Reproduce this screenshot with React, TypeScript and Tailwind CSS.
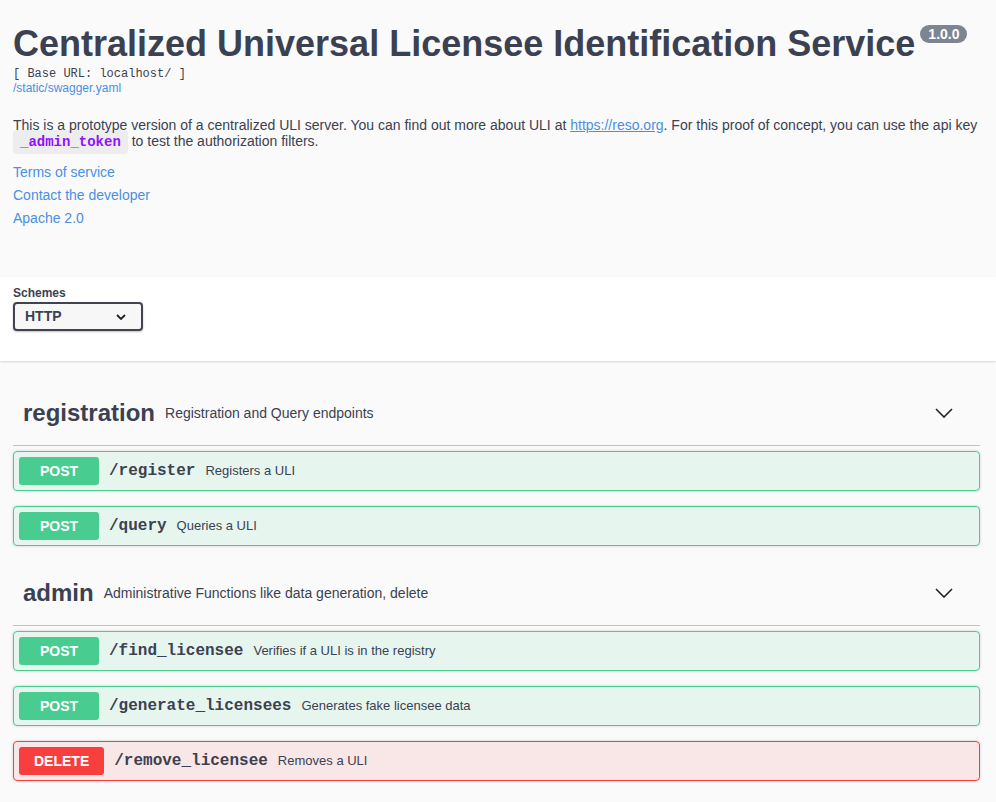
import React from "react";

type Op = { method: "POST" | "DELETE"; path: string; summary: string };

const sections: { name: string; desc: string; ops: Op[] }[] = [
  {
    name: "registration",
    desc: "Registration and Query endpoints",
    ops: [
      { method: "POST", path: "/register", summary: "Registers a ULI" },
      { method: "POST", path: "/query", summary: "Queries a ULI" },
    ],
  },
  {
    name: "admin",
    desc: "Administrative Functions like data generation, delete",
    ops: [
      { method: "POST", path: "/find_licensee", summary: "Verifies if a ULI is in the registry" },
      { method: "POST", path: "/generate_licensees", summary: "Generates fake licensee data" },
      { method: "DELETE", path: "/remove_licensee", summary: "Removes a ULI" },
    ],
  },
];

const Chevron = () => (
  <svg width="18" height="10" viewBox="0 0 18 10" fill="none">
    <path d="M1 1 L9 9 L17 1" stroke="#222" strokeWidth="1.6" />
  </svg>
);

const Operation = ({ op }: { op: Op }) => {
  const isPost = op.method === "POST";
  return (
    <div
      className={`mb-[15px] flex h-[40px] items-center rounded-[4px] border px-[5px] shadow-[0_0_3px_rgba(0,0,0,0.19)] ${
        isPost ? "border-[#49cc90] bg-[#49cc901a]" : "border-[#f93e3e] bg-[#f93e3e1a]"
      }`}
    >
      <div
        className={`flex h-[28px] min-w-[80px] items-center justify-center rounded-[3px] px-[15px] text-[14px] font-bold text-white ${
          isPost ? "bg-[#49cc90]" : "bg-[#f93e3e]"
        }`}
      >
        {op.method}
      </div>
      <span className="px-[10px] font-['Liberation_Mono','Courier_New',monospace] text-[16px] font-bold text-[#3b4151]">
        {op.path}
      </span>
      <span className="text-[13px] text-[#3b4151]">{op.summary}</span>
    </div>
  );
};

export default function App() {
  return (
    <div className="min-h-screen bg-[#fafafa] pb-[10px] font-['Liberation_Sans',Arial,sans-serif] text-[#3b4151]">
      {/* INFO */}
      <div className="px-[13px] pt-[23px] pb-[51px]">
        <div className="flex items-start">
          <h2 className="text-[36px] font-bold leading-[41px]">Centralized Universal Licensee Identification Service</h2>
          <span className="ml-[5px] mt-[2px] rounded-[57px] bg-[#7d8492] px-[8px] py-[1px] text-[14px] font-bold leading-[16px] text-white">
            1.0.0
          </span>
        </div>
        <pre className="mt-[3px] font-['Liberation_Mono','Courier_New',monospace] text-[12px] leading-[14px]">[ Base URL: localhost/ ]</pre>
        <a className="block text-[12px] leading-[14px] text-[#4990e2]">/static/swagger.yaml</a>
        <p className="mt-[22px] text-[14px] leading-[16px]">
          This is a prototype version of a centralized ULI server. You can find out more about ULI at{" "}
          <a className="text-[#4990e2] underline">https://reso.org</a>. For this proof of concept, you can use the api key{" "}
          <code className="rounded-[4px] bg-[#0000000d] px-[7px] py-[4px] font-['Liberation_Mono','Courier_New',monospace] text-[14px] font-bold text-[#9012fe]">
            _admin_token
          </code>{" "}
          to test the authorization filters.
        </p>
        <div className="mt-[14px] flex flex-col gap-[7px] text-[14px] leading-[16px] text-[#4990e2]">
          <a>Terms of service</a>
          <a>Contact the developer</a>
          <a>Apache 2.0</a>
        </div>
      </div>

      {/* SCHEMES */}
      <div className="bg-white px-[13px] pt-[9px] pb-[30px] shadow-[0_1px_2px_0_rgba(0,0,0,0.15)]">
        <div className="text-[12px] font-bold leading-[14px]">Schemes</div>
        <div className="mt-[2px] flex h-[29px] w-[130px] items-center justify-between rounded-[4px] border-2 border-[#41444e] bg-[#f7f7f7] pl-[10px] pr-[15px] shadow-[0_1px_2px_0_rgba(0,0,0,0.25)]">
          <span className="text-[14px] font-bold">HTTP</span>
          <svg width="10" height="6" viewBox="0 0 10 6" fill="none">
            <path d="M1 1 L5 5 L9 1" stroke="#222" strokeWidth="1.8" />
          </svg>
        </div>
      </div>

      {/* TAG SECTIONS */}
      <div className="mt-[20px] pl-[13px] pr-[16px]">
        {sections.map((s) => (
          <div key={s.name}>
            <div className="mb-[5px] flex h-[65px] items-center border-b border-[#3b41514d] pl-[10px] pr-[27px]">
              <h3 className="text-[24px] font-bold">{s.name}</h3>
              <span className="flex-1 px-[10px] text-[14px]">{s.desc}</span>
              <Chevron />
            </div>
            {s.ops.map((op) => (
              <Operation key={op.path} op={op} />
            ))}
          </div>
        ))}
      </div>
    </div>
  );
}
